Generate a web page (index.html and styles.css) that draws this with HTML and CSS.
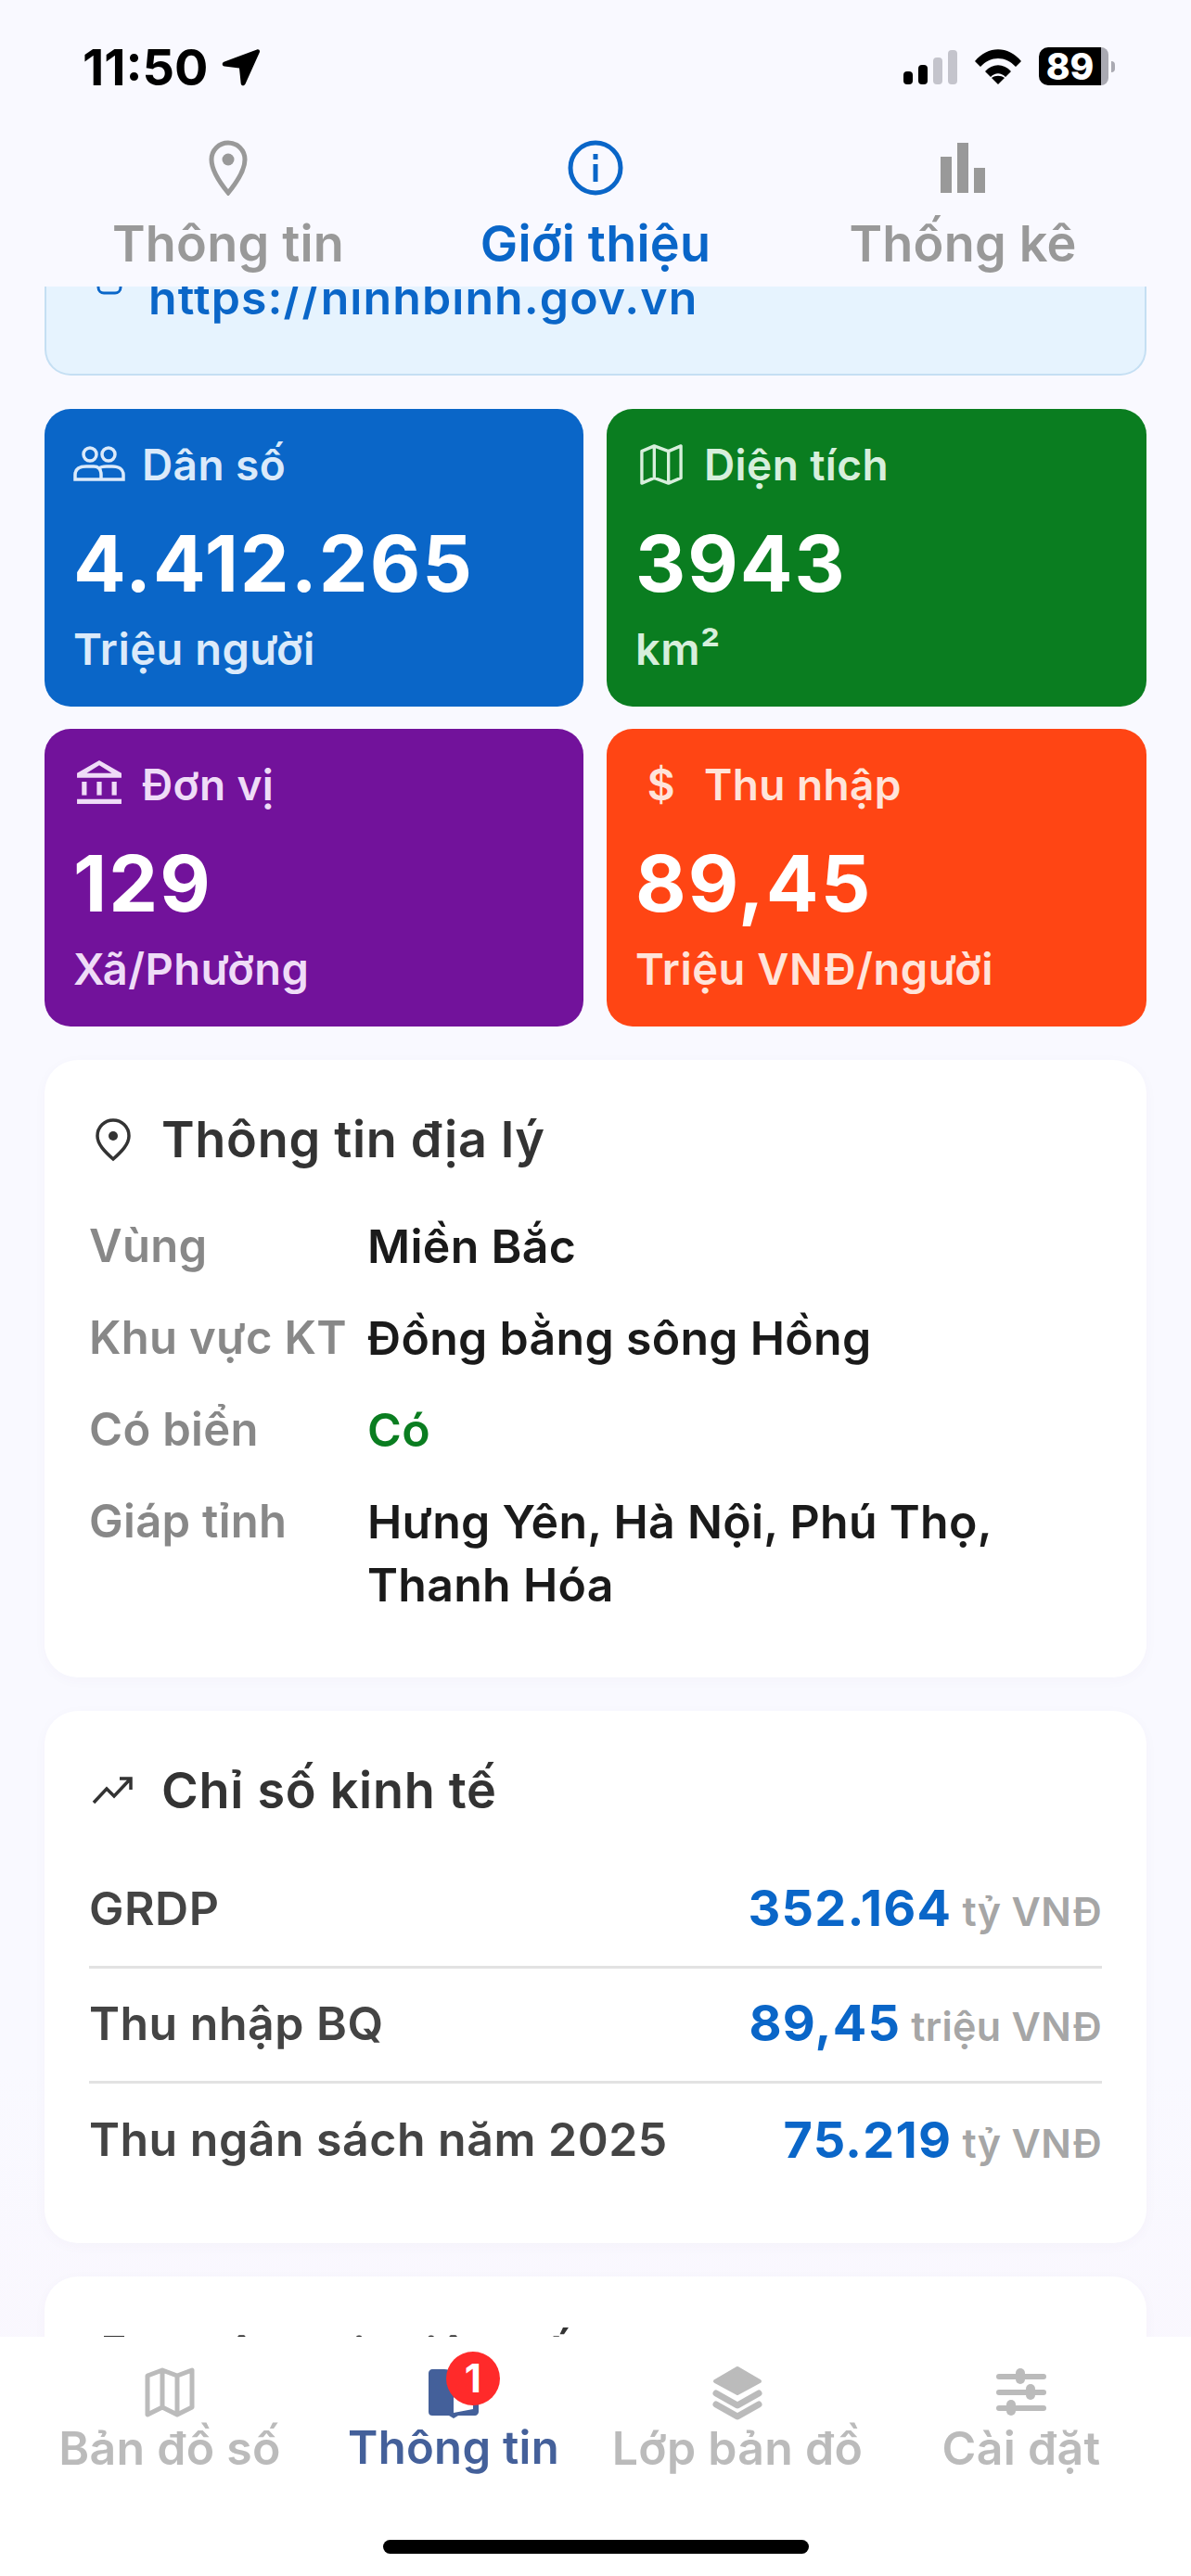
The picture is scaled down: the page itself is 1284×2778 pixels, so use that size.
FILE: index.html
```html
<!DOCTYPE html>
<html lang="vi">
<head>
<meta charset="utf-8">
<title>Giới thiệu</title>
<link rel="stylesheet" href="styles.css">
</head>
<body>
<div class="app">
  <header class="status">
    <div class="status-left">
      <span class="clock">11:50</span>
      <svg class="loc" viewBox="0 0 42 42"><path d="M38 1.5c2-.8 3.6 1 2.8 3L25.5 38.5c-1.2 2.6-4.5 2.2-4.8-.6L19 21.5 3 19.5c-2.7-.4-3.1-3.6-.6-4.7z"/></svg>
    </div>
    <div class="status-right">
      <div class="signal"><i class="b1"></i><i class="b2"></i><i class="b3"></i><i class="b4"></i></div>
      <svg class="wifi" viewBox="0 0 50 38"><path d="M0 13C14-4 36-4 50 13l-6 6C33 7 17 7 6 19z"/><path d="M11 24c8-9 20-9 28 0l-6 6c-5-5-11-5-16 0z"/><path d="M25 38l-7-7c4-3 10-3 14 0z"/></svg>
      <div class="battery"><span class="batt-body">89</span><span class="batt-rest"></span><span class="batt-knob"></span></div>
    </div>
  </header>

  <nav class="tabs">
    <div class="tab">
      <svg class="tab-icon" viewBox="0 0 42 60"><path d="M21 3C11 3 3 11 3 21c0 11 9 25 18 36 9-11 18-25 18-36C39 11 31 3 21 3z" fill="none" stroke="#999" stroke-width="5"/><circle cx="21" cy="21" r="6.500" fill="#999"/></svg>
      <span>Thông tin</span>
    </div>
    <div class="tab active">
      <svg class="tab-icon" viewBox="0 0 60 60"><circle cx="30" cy="30" r="27" fill="none" stroke="#0a66c8" stroke-width="5"/><rect x="27.500" y="26" width="5" height="19" fill="#0a66c8"/><rect x="27.500" y="15" width="5" height="6" fill="#0a66c8"/></svg>
      <span>Giới thiệu</span>
    </div>
    <div class="tab">
      <svg class="tab-icon" viewBox="0 0 60 60"><rect x="6" y="18" width="12" height="39" fill="#999"/><rect x="24" y="3" width="12" height="54" fill="#999"/><rect x="42" y="30" width="12" height="27" fill="#999"/></svg>
      <span>Thống kê</span>
    </div>
  </nav>

  <main class="content">
    <section class="intro">
      <svg class="link-icon" viewBox="0 0 36 10"><path d="M6 0v1c0 4 3 6 6 6h12c3 0 6-2 6-6V0" fill="none" stroke="#0a66c8" stroke-width="3"/></svg>
      <a class="link">https://ninhbinh.gov.vn</a>
    </section>

    <section class="stats">
      <div class="stat blue">
        <div class="stat-head">
          <svg class="stat-icon" viewBox="0 0 56 40" fill="none" stroke="currentColor" stroke-width="3.500"><circle cx="18" cy="9" r="7"/><circle cx="38" cy="9" r="7"/><path d="M2 36v-5c0-7 6-9 12-9h8c6 0 8 4 8 9v5zM28 24c2-2 5-2 8-2h6c7 0 12 3 12 9v5H30"/></svg>
          <span>Dân số</span>
        </div>
        <div class="stat-value">4.412.265</div>
        <div class="stat-unit">Triệu người</div>
      </div>
      <div class="stat green">
        <div class="stat-head">
          <svg class="stat-icon" viewBox="0 0 48 48" fill="none" stroke="currentColor" stroke-width="3.500" stroke-linejoin="round"><path d="M2 9l14-6 16 6 14-6v36l-14 6-16-6-14 6zM16 3v36M32 9v36"/></svg>
          <span>Diện tích</span>
        </div>
        <div class="stat-value">3943</div>
        <div class="stat-unit">km²</div>
      </div>
      <div class="stat purple">
        <div class="stat-head">
          <svg class="stat-icon tall" viewBox="0 0 48 48"><path d="M24 2L1 15v5h46v-5zM24 7l13 8H11z" fill="currentColor" fill-rule="evenodd"/><rect x="6" y="24" width="5" height="14" fill="currentColor"/><rect x="21.500" y="24" width="5" height="14" fill="currentColor"/><rect x="37" y="24" width="5" height="14" fill="currentColor"/><rect x="1" y="42" width="46" height="5" fill="currentColor"/></svg>
          <span>Đơn vị</span>
        </div>
        <div class="stat-value">129</div>
        <div class="stat-unit">Xã/Phường</div>
      </div>
      <div class="stat orange">
        <div class="stat-head">
          <span class="stat-icon dollar">$</span>
          <span>Thu nhập</span>
        </div>
        <div class="stat-value">89,45</div>
        <div class="stat-unit">Triệu VNĐ/người</div>
      </div>
    </section>

    <section class="card geo">
      <h2 class="card-title">
        <svg class="card-icon" viewBox="0 0 42 48" fill="none"><path d="M21 3C12 3 4 10 4 20c0 9 8 17 17 25 9-8 17-16 17-25C38 10 30 3 21 3z" stroke="#333" stroke-width="3.500"/><circle cx="21" cy="20" r="5" fill="#333"/></svg>
        <span>Thông tin địa lý</span>
      </h2>
      <dl class="facts">
        <div class="fact"><dt>Vùng</dt><dd>Miền Bắc</dd></div>
        <div class="fact"><dt>Khu vực KT</dt><dd>Đồng bằng sông Hồng</dd></div>
        <div class="fact"><dt>Có biển</dt><dd class="yes">Có</dd></div>
        <div class="fact"><dt>Giáp tỉnh</dt><dd>Hưng Yên, Hà Nội, Phú Thọ, Thanh Hóa</dd></div>
      </dl>
    </section>

    <section class="card econ">
      <h2 class="card-title">
        <svg class="card-icon" viewBox="0 0 48 48" fill="none" stroke="#333" stroke-width="3.500"><path d="M3 37l14-15 8 8 17-18M31 11h12v12"/></svg>
        <span>Chỉ số kinh tế</span>
      </h2>
      <div class="metric"><span class="m-name">GRDP</span><span class="m-val"><b>352.164</b> <small>tỷ VNĐ</small></span></div>
      <div class="metric"><span class="m-name">Thu nhập BQ</span><span class="m-val"><b>89,45</b> <small>triệu VNĐ</small></span></div>
      <div class="metric"><span class="m-name">Thu ngân sách năm 2025</span><span class="m-val"><b>75.219</b> <small>tỷ VNĐ</small></span></div>
    </section>

    <section class="card last">
      <h2 class="card-title">
        <svg class="card-icon" viewBox="0 0 48 48" fill="#333"><rect x="14" y="2" width="22" height="44"/></svg>
        <span>Thông tin liên kết</span>
      </h2>
    </section>
  </main>

  <footer class="bottom">
    <div class="nav-row">
      <div class="nav-item">
        <svg class="nav-icon" viewBox="0 0 54 60" fill="none" stroke="#bbb" stroke-width="5" stroke-linejoin="round"><path d="M3 12l16-6 16 6 16-6v40l-16 8-16-8-16 8zM19 6v40M35 12v42"/></svg>
        <span>Bản đồ số</span>
      </div>
      <div class="nav-item active">
        <div class="nav-icon-wrap">
          <svg class="nav-icon" viewBox="0 -3 54 60" fill="#44609a"><path d="M4 2c-2 0-4 2-4 4v42c0 3 2 4 4 4h18l5 3 5-3h18c2 0 4-2 4-4V6h-6v39l-21 4V4c-3-1-7-2-10-2z"/></svg>
          <span class="badge">1</span>
        </div>
        <span>Thông tin</span>
      </div>
      <div class="nav-item">
        <svg class="nav-icon" viewBox="0 0 54 60" fill="#bbb"><path d="M27 4L51 18 27 31 3 18z" stroke="#bbb" stroke-width="4" stroke-linejoin="round"/><path d="M4 31l23 13 23-13M4 43l23 13 23-13" fill="none" stroke="#bbb" stroke-width="7" stroke-linecap="round" stroke-linejoin="round"/></svg>
        <span>Lớp bản đồ</span>
      </div>
      <div class="nav-item">
        <svg class="nav-icon" viewBox="0 0 54 60" fill="#bbb"><rect x="0" y="10" width="54" height="6" rx="3"/><rect x="0" y="27" width="54" height="6" rx="3"/><rect x="0" y="44" width="54" height="6" rx="3"/><rect x="21" y="4" width="10" height="17" rx="5"/><rect x="32" y="21" width="10" height="17" rx="5"/><rect x="11" y="38" width="10" height="17" rx="5"/></svg>
        <span>Cài đặt</span>
      </div>
    </div>
    <div class="home-bar"></div>
  </footer>
</div>
</body>
</html>
```
FILE: styles.css
```css
* { box-sizing: border-box; }
html, body { margin: 0; padding: 0; }
body { font-family: Inter, "Liberation Sans", sans-serif; background: #f9f9ff; }

.app {
  width: 1284px;
  height: 2778px;
  display: flex;
  flex-direction: column;
  overflow: hidden;
  background: linear-gradient(#f9f9ff 0, #f9f9ff 80%, #faf6fd 100%);
}

/* status bar */
.status {
  height: 132px;
  flex: none;
  padding: 51px 82px 0 89px;
  display: flex;
  justify-content: space-between;
  align-items: flex-start;
}
.status-left { display: flex; align-items: center; gap: 14px; }
.clock { font-size: 54px; font-weight: 700; line-height: 44px; color: #000; }
.loc { width: 42px; height: 42px; fill: #000; }
.status-right { display: flex; align-items: center; gap: 19px; }
.signal { display: flex; align-items: flex-end; gap: 6px; height: 38px; }
.signal i { width: 10px; border-radius: 4px; background: #000; display: block; }
.signal .b1 { height: 14px; }
.signal .b2 { height: 21px; }
.signal .b3 { height: 29px; background: #c4c4cc; }
.signal .b4 { height: 37px; background: #c4c4cc; }
.wifi { width: 50px; height: 38px; fill: #000; }
.battery { display: flex; align-items: center; height: 41px; }
.batt-body {
  width: 67px;
  height: 41px;
  background: #000;
  color: #fff;
  font-size: 39px;
  font-weight: 800;
  line-height: 41px;
  text-align: center;
  border-radius: 10px 0 0 10px;
}
.batt-rest { width: 8px; height: 41px; background: #aaaab2; border-radius: 0 10px 10px 0; }
.batt-knob { width: 4px; height: 12px; margin-left: 3px; background: #aaaab2; border-radius: 0 4px 4px 0; }

/* top tabs */
.tabs {
  height: 177px;
  flex: none;
  display: grid;
  grid-template-columns: repeat(3, 396px);
  justify-content: center;
  position: relative;
  z-index: 1;
  background: #f9f9ff;
}
.tab {
  display: flex;
  flex-direction: column;
  align-items: center;
  padding-top: 19px;
  color: #999;
  font-size: 54px;
  font-weight: 600;
  line-height: 64px;
  letter-spacing: 0.2px;
}
.tab.active { color: #0a66c8; }
.tab-icon { width: 60px; height: 60px; margin-bottom: 20px; flex: none; }

/* scrolling region */
.content {
  flex: 1;
  min-height: 0;
  overflow: hidden;
  padding: 0 48px;
}
.intro {
  height: 96px;
  margin-bottom: 36px;
  background: #e6f3fe;
  border: 2px solid #c5dff3;
  border-top: 0;
  border-radius: 0 0 28px 28px;
  position: relative;
  overflow: hidden;
}
.link-icon { position: absolute; left: 50px; top: 0; width: 36px; height: 10px; }
.link {
  display: block;
  margin: -18px 0 0 110px;
  color: #0a66c8;
  font-size: 50px;
  font-weight: 600;
  line-height: 60px;
  letter-spacing: 1.1px;
  white-space: nowrap;
}

.stats {
  display: grid;
  grid-template-columns: 581px 582px;
  grid-auto-rows: 321px;
  column-gap: 25px;
  row-gap: 24px;
  margin-bottom: 36px;
}
.stat { border-radius: 28px; padding: 33px 31px 0; color: #fff; }
.blue { background: #0a66c8; --soft: #dbeafa; }
.green { background: #0a7d20; --soft: #d7efdc; }
.purple { background: #72129b; --soft: #efdcf7; }
.orange { background: #ff4514; --soft: #ffe4da; }
.stat-head {
  display: flex;
  align-items: center;
  gap: 18px;
  height: 54px;
  color: var(--soft);
  font-size: 46px;
  font-weight: 600;
  line-height: 54px;
  letter-spacing: 0.4px;
}
.stat-icon { width: 56px; height: 46px; flex: none; }
.stat-icon.tall { height: 50px; margin-top: -6px; }
.dollar { font-size: 46px; text-align: center; line-height: 46px; }
.stat-value {
  margin-top: 32px;
  font-size: 84px;
  font-weight: 700;
  line-height: 96px;
  letter-spacing: 2px;
}
.stat-unit {
  margin-top: 17px;
  color: var(--soft);
  font-size: 47px;
  font-weight: 600;
  line-height: 54px;
  letter-spacing: 0.5px;
}

/* cards */
.card {
  background: #fff;
  border-radius: 36px;
  padding: 56px 48px 0;
  margin-bottom: 36px;
  box-shadow: 0 3px 14px rgba(90, 60, 140, 0.03);
}
.card-title {
  display: flex;
  align-items: center;
  gap: 26px;
  height: 60px;
  margin: 0;
  color: #333;
  font-size: 54px;
  font-weight: 600;
  line-height: 60px;
  letter-spacing: 0.7px;
}
.card-icon { width: 52px; height: 48px; flex: none; }

.geo { height: 666px; }
.facts { margin: 55px 0 0; }
.fact { display: flex; margin-bottom: 35px; font-size: 50px; line-height: 60px; letter-spacing: 0.3px; }
.fact dt { width: 300px; flex: none; color: #888; font-size: 49px; font-weight: 600; white-space: nowrap; }
.fact dd { margin: -4px 0 0; color: #1a1a1a; font-weight: 600; line-height: 68px; }
.fact dd.yes { color: #0a7d20; }

.econ { height: 574px; }
.econ .card-title { margin-bottom: 38px; }
.metric {
  height: 124px;
  padding-bottom: 4px;
  display: flex;
  align-items: center;
  justify-content: space-between;
  color: #444;
  font-size: 50px;
  font-weight: 600;
  letter-spacing: 0.5px;
  border-bottom: 3px solid #e2e2e2;
}
.metric:last-child { border-bottom: 0; }
.m-val b { color: #0a66c8; font-size: 54px; font-weight: 700; letter-spacing: 1.2px; }
.m-val small { color: #a6a6a6; font-size: 43px; font-weight: 600; margin-left: -2px; letter-spacing: 0.3px; }

.last { height: 400px; }

/* bottom navigation */
.bottom {
  height: 258px;
  flex: none;
  background: #fff;
  position: relative;
  padding-top: 30px;
}
.nav-row {
  display: grid;
  grid-template-columns: repeat(4, 306px);
  justify-content: center;
}
.nav-item {
  display: flex;
  flex-direction: column;
  align-items: center;
  color: #bbb;
  font-size: 50px;
  font-weight: 600;
  line-height: 58px;
  letter-spacing: 0.3px;
}
.nav-item.active { color: #44609a; font-size: 49px; }
.nav-icon { width: 54px; height: 60px; margin-bottom: 1px; flex: none; display: block; }
.nav-icon-wrap { position: relative; }
.badge {
  position: absolute;
  left: 19px;
  top: -14px;
  width: 58px;
  height: 58px;
  border-radius: 50%;
  background: #ff2a2a;
  color: #fff;
  font-size: 42px;
  font-weight: 700;
  line-height: 58px;
  text-align: center;
}
.home-bar {
  width: 459px;
  height: 15px;
  margin: 70px auto 0;
  border-radius: 8px;
  background: #000;
}
```
